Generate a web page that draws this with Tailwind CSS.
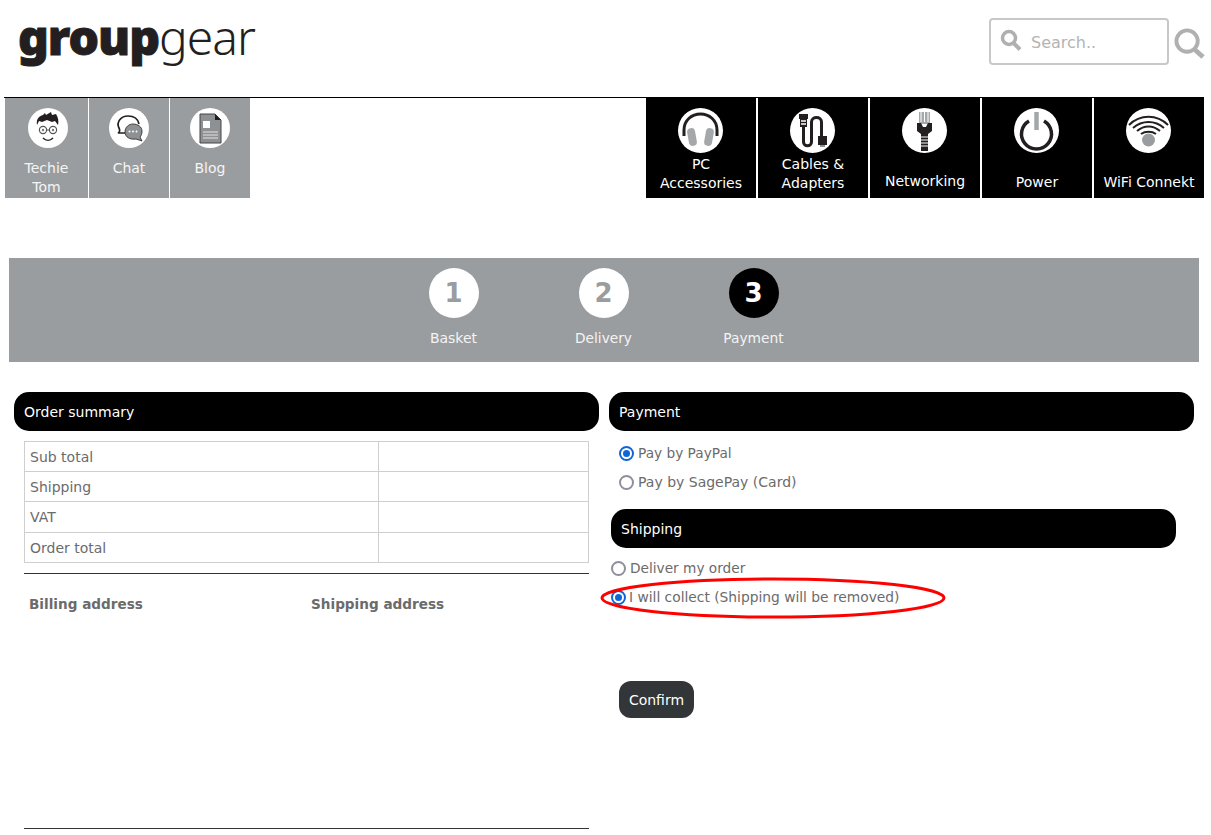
<!DOCTYPE html>
<html lang="en">
<head>
    <meta charset="UTF-8">
    <meta name="viewport" content="width=device-width, initial-scale=1.0">
    <title>groupgear - Payment</title>
    <script src="https://cdn.jsdelivr.net/npm/@tailwindcss/browser@4"></script>
</head>
<body class="bg-white font-['DejaVu_Sans',sans-serif] text-[14px] text-[#6b6b6b] overflow-hidden">
<div class="w-[1211px] h-[835px] overflow-hidden">
    <!-- header -->
    <header class="h-[97px] flex justify-between">
        <div class="pl-[18px] pt-[7px] text-[#231f20] text-[48px] leading-[60px] font-['Noto_Sans',sans-serif] tracking-[-1px]"><span class="font-black [-webkit-text-stroke:1px_#231f20]">group</span><span class="font-light">gear</span></div>
        <div class="flex items-start pt-[18px] pr-[6px]">
            <div class="w-[180px] h-[47px] border-2 border-[#c8c8c8] rounded-[4px] flex items-center pl-[9px] gap-[9px] text-[16px] text-[#b4b4b4]">
                <svg class="w-[22px] h-[22px] mt-[-3px]" viewBox="0 0 22 22" fill="none" stroke="#b0b0b0"><circle cx="9" cy="9" r="6.5" stroke-width="3.5"/><path d="M13.5 14 20 20.5" stroke-width="4"/></svg>
                <span class="mt-[2px]">Search..</span>
            </div>
            <svg class="w-[31px] h-[31px] ml-[5px] mt-[10px]" viewBox="0 0 32 32" fill="none" stroke="#b0b0b0"><circle cx="13.5" cy="13.5" r="11" stroke-width="4"/><path d="M21 22 30 30" stroke-width="5"/></svg>
        </div>
    </header>

    <!-- nav -->
    <nav class="ml-[4px] w-[1200px] h-[101px] border-t border-black flex justify-between text-[14px]">
        <div class="flex gap-[1px] pl-[1px] text-[#f4f4f4]">
            <a class="w-[83px] h-[100px] bg-[#9a9d9f] flex flex-col items-center pt-[10px] leading-[19px]">
                <span class="w-[40px] h-[40px] rounded-full bg-white flex items-center justify-center mr-[-2px]">
                    <svg class="w-[40px] h-[40px]" viewBox="0 0 40 40" fill="none"><path d="M9 17c-1-6 2-9 6-10l2-2 1 2 5-3 1 3 4-1c2 3 3 7 2 11l-3-4-3 1-5-2-5 2-3-1z" fill="#231f20"/><circle cx="15" cy="22" r="3.6" stroke="#555" stroke-width="1.2"/><circle cx="25" cy="22" r="3.6" stroke="#555" stroke-width="1.2"/><circle cx="15" cy="22" r="1.2" fill="#777"/><circle cx="25" cy="22" r="1.2" fill="#777"/><path d="M18.600 22h2.800" stroke="#555"/><path d="M15 30c3 3 7 3 10 0" stroke="#231f20" stroke-width="1.6"/></svg>
                </span>
                <span class="mt-[11px] text-center">Techie<br>Tom</span>
            </a>
            <a class="w-[80px] h-[100px] bg-[#9a9d9f] flex flex-col items-center pt-[10px] leading-[19px]">
                <span class="w-[40px] h-[40px] rounded-full bg-white flex items-center justify-center mr-[1px]">
                    <svg class="w-[40px] h-[40px]" viewBox="0 0 40 40" fill="none"><path d="M16 25H9c2-1 2-3 1-5-3-6 2-12 9-12 6 0 10 3 11 8" stroke="#231f20" stroke-width="1.7"/><path d="M24 16c5 0 9 3 9 7 0 3-1 5-2 6l2 4-6-2c-6 1-11-2-11-7 0-5 4-8 8-8z" fill="#8d9193" stroke="#231f20" stroke-width="0.8"/><circle cx="20.500" cy="23.500" r="1" fill="#fff"/><circle cx="24" cy="23.500" r="1" fill="#fff"/><circle cx="27.500" cy="23.500" r="1" fill="#fff"/></svg>
                </span>
                <span class="mt-[11px]">Chat</span>
            </a>
            <a class="w-[80px] h-[100px] bg-[#9a9d9f] flex flex-col items-center pt-[10px] leading-[19px]">
                <span class="w-[40px] h-[40px] rounded-full bg-white flex items-center justify-center mr-[1px]">
                    <svg class="w-[40px] h-[40px]" viewBox="0 0 40 40" fill="none"><path d="M10 6h15l6 6v23H10z" fill="#8d9193" stroke="#444" stroke-width="1"/><path d="M25 6l6 6h-6z" fill="#231f20"/><rect x="13" y="13" width="7" height="7" fill="#fff"/><path d="M13 24h15M13 27h15M13 30h15" stroke="#e4e4e4"/></svg>
                </span>
                <span class="mt-[11px]">Blog</span>
            </a>
        </div>
        <div class="flex gap-[2px] text-white">
            <a class="w-[110px] h-[100px] bg-black flex flex-col items-center pt-[10px]">
                <span class="w-[45px] h-[45px] rounded-full bg-white shrink-0 mr-[2px]">
                    <svg class="w-[45px] h-[45px]" viewBox="0 0 45 45" fill="none"><path d="M6 28V22C6 12 14 6 22.500 6S39 12 39 22v6" stroke="#231f20" stroke-width="3"/><rect x="10" y="20" width="8" height="18" rx="4" fill="#a5a8aa" transform="rotate(-10 14 29)"/><rect x="27" y="20" width="8" height="18" rx="4" fill="#a5a8aa" transform="rotate(10 31 29)"/></svg>
                </span>
                <span class="mt-[2px] text-center leading-[19px]">PC<br>Accessories</span>
            </a>
            <a class="w-[110px] h-[100px] bg-black flex flex-col items-center pt-[10px]">
                <span class="w-[45px] h-[45px] rounded-full bg-white shrink-0 mr-[2px]">
                    <svg class="w-[45px] h-[45px]" viewBox="0 0 45 45" fill="none"><path d="M9 6h9v5h-1v8h-7v-8H9z" fill="#231f20"/><path d="M11 13h5M11 16h5" stroke="#fff" stroke-width="1.500"/><path d="M13.500 19v15c0 5 8 5 8 0V14c0-6 10-6 10 0v14" stroke="#231f20" stroke-width="3"/><rect x="28" y="28" width="9" height="9" fill="#231f20"/><rect x="30" y="37" width="5" height="2" fill="#8d9193"/></svg>
                </span>
                <span class="mt-[2px] text-center leading-[19px]">Cables &amp;<br>Adapters</span>
            </a>
            <a class="w-[110px] h-[100px] bg-black flex flex-col items-center pt-[10px]">
                <span class="w-[45px] h-[45px] rounded-full bg-white shrink-0 mr-[2px]">
                    <svg class="w-[45px] h-[45px]" viewBox="0 0 45 45" fill="none"><rect x="17" y="4" width="11" height="12" fill="#a5a8aa"/><path d="M19 4v10M22.500 4v10M26 4v10" stroke="#fff"/><path d="M15 15h4l2 4h3l2-4h4v8l-4 3v17h-7V26l-4-3z" fill="#231f20"/><path d="M17 29h11M17 32h11M17 35h11M17 38h11" stroke="#fff" stroke-width="1"/></svg>
                </span>
                <span class="mt-[18px]">Networking</span>
            </a>
            <a class="w-[110px] h-[100px] bg-black flex flex-col items-center pt-[10px]">
                <span class="w-[45px] h-[45px] rounded-full bg-white shrink-0 mr-[2px]">
                    <svg class="w-[45px] h-[45px]" viewBox="0 0 45 45" fill="none"><path d="M15 13a15 15 0 1 0 15 0" stroke="#231f20" stroke-width="3.500"/><path d="M22.500 4v18" stroke="#a5a8aa" stroke-width="4.500"/></svg>
                </span>
                <span class="mt-[19px]">Power</span>
            </a>
            <a class="w-[110px] h-[100px] bg-black flex flex-col items-center pt-[10px]">
                <span class="w-[45px] h-[45px] rounded-full bg-white shrink-0 mr-[2px]">
                    <svg class="w-[45px] h-[45px]" viewBox="0 0 45 45" fill="none" stroke="#231f20" stroke-width="2"><path d="M3 17c11-11 28-11 39 0M7 20c9-8 22-8 31 0M11 23c7-6 16-6 23 0M15 26c4-3 11-3 15 0"/><circle cx="22.500" cy="32" r="6.500" fill="#9a9d9f" stroke="none"/></svg>
                </span>
                <span class="mt-[19px] whitespace-nowrap">WiFi Connekt</span>
            </a>
        </div>
    </nav>

    <!-- checkout steps -->
    <div class="mt-[60px] ml-[9px] w-[1190px] h-[104px] bg-[#9a9d9f] flex justify-center gap-[50px] pt-[10px] pr-[1px]">
        <div class="w-[100px] flex flex-col items-center text-[#f4f4f4]">
            <span class="w-[50px] h-[50px] rounded-full bg-white text-[#9a9d9f] text-[26px] font-bold flex items-center justify-center">1</span>
            <span class="mt-[11px] leading-[19px]">Basket</span>
        </div>
        <div class="w-[100px] flex flex-col items-center text-[#f4f4f4]">
            <span class="w-[50px] h-[50px] rounded-full bg-white text-[#9a9d9f] text-[26px] font-bold flex items-center justify-center">2</span>
            <span class="mt-[11px] leading-[19px] text-[13.7px]">Delivery</span>
        </div>
        <div class="w-[100px] flex flex-col items-center text-[#f4f4f4]">
            <span class="w-[50px] h-[50px] rounded-full bg-black text-white text-[26px] font-bold flex items-center justify-center">3</span>
            <span class="mt-[11px] leading-[19px] text-[13.8px]">Payment</span>
        </div>
    </div>

    <!-- columns -->
    <div class="mt-[30px] flex">
        <section class="ml-[14px] w-[585px]">
            <h2 class="h-[39px] bg-black text-white rounded-[15px] px-[10px] pt-[2px] flex items-center">Order summary</h2>
            <div class="ml-[10px] w-[565px] mt-[10px]">
                <table class="w-full border-collapse table-fixed">
                    <tr class="h-[30px]"><td class="w-[354px] border border-[#cfcfcf] px-[5px] pt-[2px]">Sub total</td><td class="border border-[#cfcfcf]"></td></tr>
                    <tr class="h-[30px]"><td class="border border-[#cfcfcf] px-[5px] pt-[2px]">Shipping</td><td class="border border-[#cfcfcf]"></td></tr>
                    <tr class="h-[31px]"><td class="border border-[#cfcfcf] px-[5px]">VAT</td><td class="border border-[#cfcfcf]"></td></tr>
                    <tr class="h-[30px]"><td class="border border-[#cfcfcf] px-[5px] pt-[2px]">Order total</td><td class="border border-[#cfcfcf]"></td></tr>
                </table>
                <div class="mt-[10px] h-[256px] border-t border-b border-[#333] flex pt-[21px] font-bold leading-[19px] text-[13.6px]">
                    <span class="ml-[5px] w-[282px]">Billing address</span>
                    <span>Shipping address</span>
                </div>
            </div>
        </section>

        <section class="ml-[10px] w-[585px] relative">
            <h2 class="h-[39px] bg-black text-white rounded-[15px] px-[10px] pt-[2px] flex items-center">Payment</h2>
            <div class="ml-[10px] mt-[13px] flex items-center gap-[4px] h-[19px] text-[13.7px]">
                <span class="w-[15px] h-[15px] rounded-full border-2 border-[#0f66d6] flex items-center justify-center"><span class="w-[7px] h-[7px] rounded-full bg-[#0f66d6]"></span></span>
                Pay by PayPal
            </div>
            <div class="ml-[10px] mt-[10px] flex items-center gap-[4px] h-[19px]">
                <span class="w-[15px] h-[15px] rounded-full border-2 border-[#8f8f9d]"></span>
                Pay by SagePay (Card)
            </div>
            <h2 class="ml-[2px] mt-[17px] w-[565px] h-[39px] bg-black text-white rounded-[15px] px-[10px] pt-[2px] flex items-center">Shipping</h2>
            <div class="ml-[2px] mt-[11px] flex items-center gap-[4px] h-[19px] text-[13.7px]">
                <span class="w-[15px] h-[15px] rounded-full border-2 border-[#8f8f9d]"></span>
                Deliver my order
            </div>
            <div class="ml-[2px] mt-[10px] flex items-center gap-[3px] h-[19px] text-[13.8px]">
                <span class="w-[15px] h-[15px] rounded-full border-2 border-[#0f66d6] flex items-center justify-center"><span class="w-[7px] h-[7px] rounded-full bg-[#0f66d6]"></span></span>
                I will collect (Shipping will be removed)
            </div>
            <button class="block ml-[10px] mt-[74px] w-[75px] h-[37px] pt-[1px] bg-[#333638] text-white rounded-[12px]">Confirm</button>
            <!-- red annotation over the collect option -->
            <svg class="absolute left-[-9px] top-[185px] w-[346px] h-[42px]" viewBox="0 0 346 42" fill="none"><ellipse cx="173" cy="21" rx="171" ry="19" stroke="#ff0000" stroke-width="3"/></svg>
        </section>
    </div>
</div>
</body>
</html>
